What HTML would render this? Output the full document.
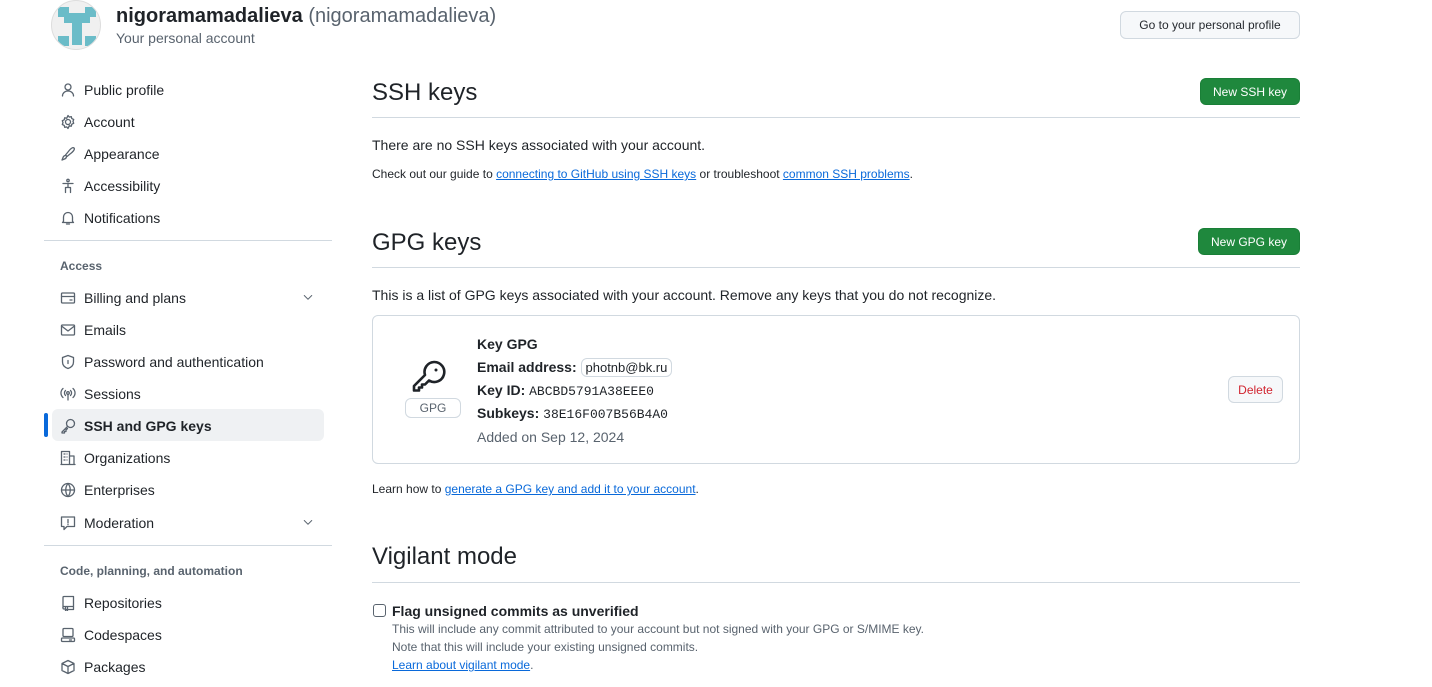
<!DOCTYPE html>
<html><head><meta charset="utf-8"><style>
*{box-sizing:border-box;margin:0;padding:0}
body{width:1432px;height:687px;overflow:hidden;background:#fff;font-family:"Liberation Sans",sans-serif;color:#1f2328;position:relative}
.a{position:absolute;white-space:nowrap}
.nav{position:absolute;left:52px;width:272px;height:32px;display:flex;align-items:center;font-size:14px;color:#1f2328;padding-top:2px}
.nav svg{width:16px;height:16px;margin:0 8px 0 8px;fill:none;stroke:#59636e;stroke-width:1.3;stroke-linecap:round;stroke-linejoin:round}
.nav svg.chev{position:absolute;right:10px;top:10px;width:12px;height:12px;margin:0}
.hdr{position:absolute;left:60px;font-size:12px;font-weight:bold;color:#59636e}
.btn{position:absolute;border-radius:6px;font-size:12px;display:flex;align-items:center;justify-content:center}
.green{background:#1f883d;color:#fff;border:1px solid #1a7f37}
.lnk{color:#0969da;text-decoration:underline}
.mono{font-family:"Liberation Mono",monospace;font-size:13px}
.hr{position:absolute;height:1px;background:#d1d9e0}
</style></head><body>
<div class="a" style="left:51px;top:0;width:50px;height:50px;border-radius:50%;background:#f0f0f0;border:1px solid #ddd;overflow:hidden">
<svg width="50" height="50" viewBox="0 0 50 50"><rect x="6" y="6" width="11" height="10" fill="#6bbcc8"/><rect x="33" y="6" width="11" height="10" fill="#6bbcc8"/><rect x="12" y="12" width="26" height="10" fill="#6bbcc8"/><rect x="20" y="22" width="10" height="22" fill="#6bbcc8"/><rect x="6" y="35" width="11" height="10" fill="#6bbcc8"/><rect x="33" y="35" width="11" height="10" fill="#6bbcc8"/></svg></div>
<div class="a" style="left:116px;top:5px;font-size:20px;font-weight:bold">nigoramamadalieva <span style="font-weight:normal;color:#59636e">(nigoramamadalieva)</span></div>
<div class="a" style="left:116px;top:30px;font-size:14px;color:#59636e">Your personal account</div>
<div class="btn" style="left:1120px;top:11px;width:180px;height:28px;background:#f6f8fa;border:1px solid #d1d9e0;color:#25292e">Go to your personal profile</div>

<div class="nav" style="top:73px"><svg viewBox="0 0 16 16"><circle cx="8" cy="5" r="3"/><path d="M2.5 14c0-3 2.5-5 5.5-5s5.5 2 5.5 5"/></svg>Public profile</div>
<div class="nav" style="top:105px"><svg viewBox="0 0 16 16"><circle cx="8" cy="8" r="2.5"/><path d="M8 1.5l1.3 1.6 2-.5.5 2 1.9.9-.7 1.9.7 1.9-1.9.9-.5 2-2-.5L8 14.5l-1.3-1.6-2 .5-.5-2-1.9-.9.7-1.9-.7-1.9 1.9-.9.5-2 2 .5z"/></svg>Account</div>
<div class="nav" style="top:137px"><svg viewBox="0 0 16 16"><path d="M14 2c-1-1-3 0-6 4L5.5 9l1.5 1.5L10 8c4-3 5-5 4-6zM5.5 9.5C3 9.5 3 12 2 14c2-1 4.5-1 4.5-3.5"/></svg>Appearance</div>
<div class="nav" style="top:169px"><svg viewBox="0 0 16 16"><circle cx="8" cy="2.5" r="1.2"/><path d="M3 5.5h10M8 5.5v4M5.5 9.5h5M5.5 9.5v5M10.5 9.5v5"/></svg>Accessibility</div>
<div class="nav" style="top:201px"><svg viewBox="0 0 16 16"><path d="M3.5 11.5V7a4.5 4.5 0 019 0v4.5l1 1h-11zM6.5 14h3"/></svg>Notifications</div>
<div class="hr" style="left:44px;top:240px;width:288px"></div>
<div class="hdr" style="top:259px">Access</div>
<div class="nav" style="top:281px"><svg viewBox="0 0 16 16"><rect x="1.5" y="3" width="13" height="10" rx="1"/><path d="M1.5 6.5h13M10 10h2"/></svg>Billing and plans<svg class="chev" viewBox="0 0 16 16"><path d="M3 6l5 5 5-5"/></svg></div>
<div class="nav" style="top:313px"><svg viewBox="0 0 16 16"><rect x="1.5" y="3" width="13" height="10" rx="1"/><path d="M1.5 4l6.5 5 6.5-5"/></svg>Emails</div>
<div class="nav" style="top:345px"><svg viewBox="0 0 16 16"><path d="M8 1.5l5.5 2v4.5c0 3.5-2.5 5.5-5.5 6.5C5 13.5 2.5 11.5 2.5 8V3.5z"/><path d="M8 6.5v3"/></svg>Password and authentication</div>
<div class="nav" style="top:377px"><svg viewBox="0 0 16 16"><circle cx="8" cy="7" r="1.3"/><path d="M8 8.5V14M5.5 4.5a3.5 3.5 0 000 5M10.5 4.5a3.5 3.5 0 010 5M3 2.5a6 6 0 000 9M13 2.5a6 6 0 010 9"/></svg>Sessions</div>
<div class="a" style="left:52px;top:409px;width:272px;height:32px;background:#eff1f3;border-radius:6px"></div>
<div class="a" style="left:44px;top:413px;width:4px;height:24px;background:#0969da;border-radius:2px"></div>
<div class="nav" style="top:409px;font-weight:bold"><svg viewBox="0 0 16 16"><circle cx="10.5" cy="5.5" r="4"/><path d="M7.5 8.5L2 14v1h2.5v-1.5H6V12l1.5-1.5"/></svg>SSH and GPG keys</div>
<div class="nav" style="top:441px"><svg viewBox="0 0 16 16"><path d="M1.5 14.5V1.5h8v13M9.5 6h4.5v8.5M1 14.5h14M4 4h1M7 4h0M4 7h1M4 10h1M7 7h0M7 10h0"/></svg>Organizations</div>
<div class="nav" style="top:473px"><svg viewBox="0 0 16 16"><circle cx="8" cy="8" r="6.5"/><path d="M1.5 8h13M8 1.5c-3 3.5-3 9.5 0 13M8 1.5c3 3.5 3 9.5 0 13"/></svg>Enterprises</div>
<div class="nav" style="top:506px"><svg viewBox="0 0 16 16"><path d="M1.5 2h13v9.5H7l-3 3v-3H1.5z"/><path d="M8 4.5v3.5M8 9.5v.2"/></svg>Moderation<svg class="chev" viewBox="0 0 16 16"><path d="M3 6l5 5 5-5"/></svg></div>
<div class="hr" style="left:44px;top:545px;width:288px"></div>
<div class="hdr" style="top:564px">Code, planning, and automation</div>
<div class="nav" style="top:586px"><svg viewBox="0 0 16 16"><path d="M3 13V2.5a1 1 0 011-1h9.5v10H4a1 1 0 00-1 1.5 1 1 0 001 1h1.5M8 14.5h5.5v-3M5.5 12v3.5l1-1 1 1V12"/></svg>Repositories</div>
<div class="nav" style="top:618px"><svg viewBox="0 0 16 16"><rect x="3" y="1.5" width="10" height="8" rx="1"/><rect x="1.5" y="11" width="13" height="3.5" rx="1"/><path d="M9.5 13h2"/></svg>Codespaces</div>
<div class="nav" style="top:650px"><svg viewBox="0 0 16 16"><path d="M8 1.5l6 3v7l-6 3-6-3v-7zM2 4.5l6 3 6-3M8 7.5v7"/></svg>Packages</div>

<div class="a" style="left:372px;top:79px;font-size:24px">SSH keys</div>
<div class="btn green" style="left:1200px;top:78px;width:100px;height:27px">New SSH key</div>
<div class="hr" style="left:372px;top:117px;width:928px"></div>
<div class="a" style="left:372px;top:137px;font-size:14px">There are no SSH keys associated with your account.</div>
<div class="a" style="left:372px;top:167px;font-size:12px">Check out our guide to <span class="lnk">connecting to GitHub using SSH keys</span> or troubleshoot <span class="lnk">common SSH problems</span>.</div>

<div class="a" style="left:372px;top:229px;font-size:24px">GPG keys</div>
<div class="btn green" style="left:1198px;top:228px;width:102px;height:27px">New GPG key</div>
<div class="hr" style="left:372px;top:267px;width:928px"></div>
<div class="a" style="left:372px;top:287px;font-size:14px">This is a list of GPG keys associated with your account. Remove any keys that you do not recognize.</div>
<div class="a" style="left:372px;top:315px;width:928px;height:149px;border:1px solid #d1d9e0;border-radius:6px"></div>
<svg class="a" style="left:412px;top:360px" width="36" height="34" viewBox="0 0 36 34" fill="none" stroke="#1f2328" stroke-width="2.6" stroke-linejoin="round"><path d="M22 2a10 10 0 11-5 18.5L13 24.5h-3v3H7v3H2V26l11-11A10 10 0 0122 2z"/><circle cx="24" cy="10" r="1.5" fill="#1f2328" stroke="none"/></svg>
<div class="a" style="left:405px;top:398px;width:56px;height:20px;border:1px solid #d1d9e0;border-radius:6px;font-size:12px;color:#59636e;text-align:center;line-height:18px">GPG</div>
<div class="a" style="left:477px;top:336px;font-size:14px;font-weight:bold">Key GPG</div>
<div class="a" style="left:477px;top:358px;font-size:14px"><b>Email address:</b> <span style="display:inline-block;border:1px solid #d1d9e0;border-radius:6px;padding:1px 4px;font-size:13px">photnb@bk.ru</span></div>
<div class="a" style="left:477px;top:382px;font-size:14px"><b>Key ID:</b> <span class="mono">ABCBD5791A38EEE0</span></div>
<div class="a" style="left:477px;top:405px;font-size:14px"><b>Subkeys:</b> <span class="mono">38E16F007B56B4A0</span></div>
<div class="a" style="left:477px;top:429px;font-size:14px;color:#59636e">Added on Sep 12, 2024</div>
<div class="btn" style="left:1228px;top:376px;width:55px;height:27px;background:#f6f8fa;border:1px solid #d1d9e0;color:#d1242f">Delete</div>
<div class="a" style="left:372px;top:482px;font-size:12px">Learn how to <span class="lnk">generate a GPG key and add it to your account</span>.</div>

<div class="a" style="left:372px;top:543px;font-size:24px">Vigilant mode</div>
<div class="hr" style="left:372px;top:582px;width:928px"></div>
<div class="a" style="left:373px;top:604px;width:13px;height:13px;border:1px solid #59636e;border-radius:3px"></div>
<div class="a" style="left:392px;top:603px;font-size:14px;font-weight:bold">Flag unsigned commits as unverified</div>
<div class="a" style="left:392px;top:622px;font-size:12px;color:#59636e">This will include any commit attributed to your account but not signed with your GPG or S/MIME key.</div>
<div class="a" style="left:392px;top:640px;font-size:12px;color:#59636e">Note that this will include your existing unsigned commits.</div>
<div class="a" style="left:392px;top:658px;font-size:12px;color:#59636e"><span class="lnk">Learn about vigilant mode</span>.</div>
</body></html>
